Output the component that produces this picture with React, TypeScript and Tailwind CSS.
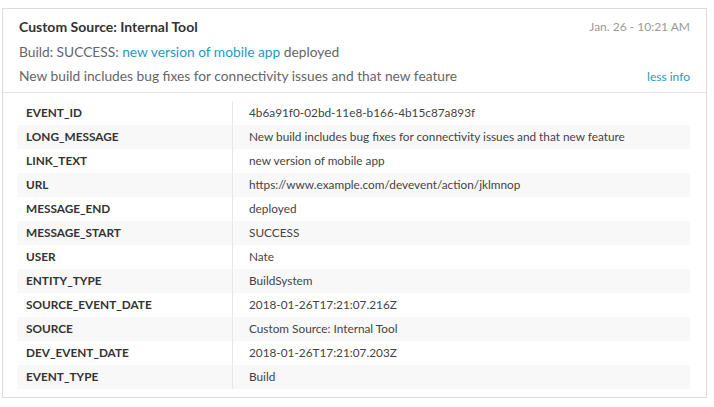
import React from "react";

const rows: [string, string][] = [
  ["EVENT_ID", "4b6a91f0-02bd-11e8-b166-4b15c87a893f"],
  ["LONG_MESSAGE", "New build includes bug fixes for connectivity issues and that new feature"],
  ["LINK_TEXT", "new version of mobile app"],
  ["URL", "https://www.example.com/devevent/action/jklmnop"],
  ["MESSAGE_END", "deployed"],
  ["MESSAGE_START", "SUCCESS"],
  ["USER", "Nate"],
  ["ENTITY_TYPE", "BuildSystem"],
  ["SOURCE_EVENT_DATE", "2018-01-26T17:21:07.216Z"],
  ["SOURCE", "Custom Source: Internal Tool"],
  ["DEV_EVENT_DATE", "2018-01-26T17:21:07.203Z"],
  ["EVENT_TYPE", "Build"],
];

export default function App() {
  return (
    <div className="w-[714px] h-[407px] bg-white pt-2 pl-[2px] font-['Lato',sans-serif]">
      <div className="w-[705px] border border-[#dcdcdc] bg-white">
        {/* Header */}
        <div className="pl-4 pr-4 pt-[5px] pb-[3px] border-b border-[#e2e2e2]">
          <div className="flex items-center justify-between h-[25px]">
            <span className="text-[14px] font-bold text-[#333]">Custom Source: Internal Tool</span>
            <span className="text-[12px] text-[#9a9a9a]">Jan. 26 - 10:21 AM</span>
          </div>
          <div className="h-[25px] leading-[25px] text-[13.75px] text-[#666]">
            Build: SUCCESS: <a className="text-[#1a9bc6]">new version of mobile app</a> deployed
          </div>
          <div className="flex items-center justify-between h-[25px]">
            <span className="text-[13.75px] text-[#666]">
              New build includes bug fixes for connectivity issues and that new feature
            </span>
            <a className="text-[12px] text-[#1a9bc6]">less info</a>
          </div>
        </div>

        {/* Details table */}
        <div className="pt-2 pb-2 pl-[14px] pr-4">
          {rows.map(([key, value], i) => (
            <div
              key={key}
              className={`flex h-6 items-center text-[11.8px] ${i % 2 === 1 ? "bg-[#f8f8f8]" : ""}`}
            >
              <div className="w-[215px] pl-[9px] font-bold text-[#333]">{key}</div>
              <div className="self-stretch border-l border-[#e6e6e6]" />
              <div className="pl-4 text-[#444]">{value}</div>
            </div>
          ))}
        </div>
      </div>
    </div>
  );
}
